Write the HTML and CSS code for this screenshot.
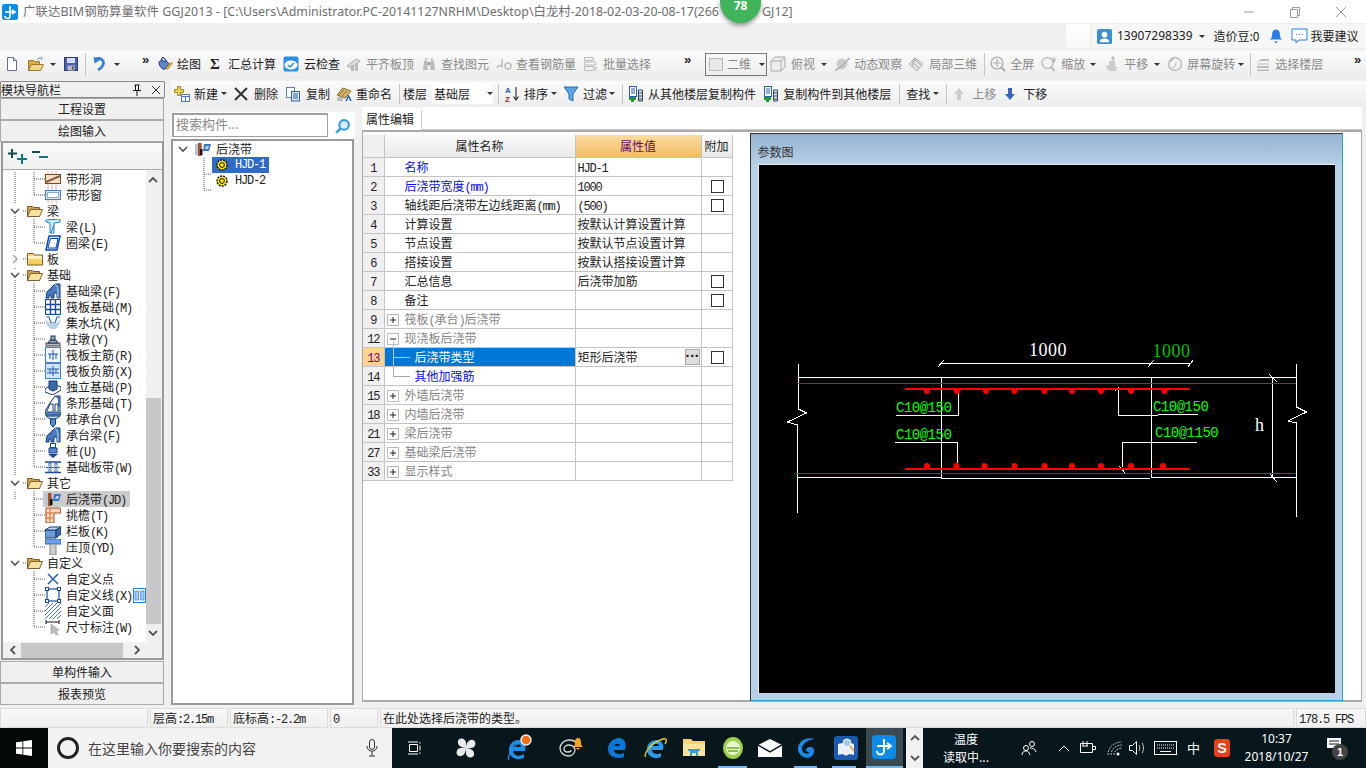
FILE: index.html
```html
<!DOCTYPE html>
<html lang="zh-CN">
<head>
<meta charset="utf-8">
<title>广联达BIM钢筋算量软件 GGJ2013</title>
<link rel="stylesheet" href="styles.css">
</head>
<body>
<svg class="defs" aria-hidden="true">
<defs>
<symbol id="caret-d" viewBox="0 0 10 10"><path d="M1 3l4 4 4-4" fill="none" stroke="#555" stroke-width="1.6"/></symbol>
<symbol id="caret-r" viewBox="0 0 10 10"><path d="M3 1l4 4-4 4" fill="none" stroke="#aaa" stroke-width="1.6"/></symbol>
<symbol id="arr-u" viewBox="0 0 10 10"><path d="M1 7l4-4 4 4" fill="none" stroke="#555" stroke-width="1.8"/></symbol>
<symbol id="arr-d" viewBox="0 0 10 10"><path d="M1 3l4 4 4-4" fill="none" stroke="#555" stroke-width="1.8"/></symbol>
<symbol id="arr-l" viewBox="0 0 10 10"><path d="M7 1L3 5l4 4" fill="none" stroke="#555" stroke-width="1.8"/></symbol>
<symbol id="arr-r" viewBox="0 0 10 10"><path d="M3 1l4 4-4 4" fill="none" stroke="#555" stroke-width="1.8"/></symbol>
<symbol id="new" viewBox="0 0 16 16"><path d="M3.500 1.500h6l3 3v10h-9z" fill="#fff" stroke="#67708a"/><path d="M9.500 1.500v3h3" fill="#d8dfef" stroke="#67708a"/></symbol>
<symbol id="open" viewBox="0 0 16 16"><path d="M.5 4.500h5l1 1h5v9H.5z" fill="#d9aa45" stroke="#9a7a2c"/><path d="M.5 14.500l3-6h12l-3 6z" fill="#f4d88a" stroke="#9a7a2c"/><path d="M9 4c1-2 3-3 5-2l-1-1m1 1l-1 2" fill="none" stroke="#6a90c0"/></symbol>
<symbol id="save" viewBox="0 0 16 16"><rect x="1.500" y="1.500" width="13" height="13" fill="#4b5fb4" stroke="#2d3a7c"/><rect x="4" y="2" width="8" height="5" fill="#d5dcf2"/><rect x="4.500" y="9.500" width="7" height="5" fill="#bbb"/><rect x="9" y="10.500" width="1.500" height="3" fill="#445"/></symbol>
<symbol id="undo" viewBox="0 0 16 16"><path d="M3 3.500c5-2.500 10 .5 8 5.500-1 2.500-3 4-5 5" fill="none" stroke="#3a80d0" stroke-width="2.800"/><path d="M1.500.5l1 7 5-3z" fill="#3a80d0"/></symbol>
<symbol id="draw" viewBox="0 0 16 16"><path d="M2 6l5-4 5 6-4 5c-3 1-6-3-6-7z" fill="#5d85c8" stroke="#223c78"/><path d="M4 3l2-2 3 3-2 2z" fill="#a7c0e8" stroke="#223c78"/><path d="M9 12l5-6 1.500 1.500-5 6z" fill="#e6b93d" stroke="#8a6c15" stroke-width=".6"/></symbol>
<symbol id="cloud" viewBox="0 0 16 16"><rect x=".5" y=".5" width="15" height="15" rx="2" fill="#2a8fe0"/><ellipse cx="8" cy="9" rx="6.500" ry="4.500" fill="#fff"/><path d="M5 9l2 2 4-4" fill="none" stroke="#2a8fe0" stroke-width="1.500"/></symbol>
<symbol id="flat" viewBox="0 0 16 16"><path d="M1 10l9-7 4 2-9 7z" fill="#ddd" stroke="#aaa"/><path d="M5 15V9h3v6zM9 15V7h3v8z" fill="#bbb"/></symbol>
<symbol id="binoc" viewBox="0 0 16 16"><path d="M2 14l1-9h3l1 9zM9 14l1-9h3l1 9z" fill="#bbb"/><rect x="4" y="2" width="2.500" height="3" fill="#ccc"/><rect x="9.500" y="2" width="2.500" height="3" fill="#ccc"/><rect x="6.500" y="6" width="3" height="3" fill="#999"/></symbol>
<symbol id="rebar" viewBox="0 0 16 16"><circle cx="12" cy="10" r="3" fill="none" stroke="#bbb" stroke-width="1.500"/><path d="M1 12c1-3 3-3 5-1 .5-1 0-6 0-8" fill="none" stroke="#bbb" stroke-width="1.500"/></symbol>
<symbol id="batch" viewBox="0 0 16 16"><path d="M1.500 1.500h9v3h-9zM1.500 6h11v3h-11zM1.500 10.500h9v4h-9z" fill="#f3f3f3" stroke="#bbb"/><path d="M10 10l5 2-2 1 1 2-1 .5-1-2-2 1z" fill="#ccc"/></symbol>
<symbol id="square" viewBox="0 0 16 16"><rect x="1.500" y="2.500" width="13" height="12" fill="#e8e8e8" stroke="#bbb"/></symbol>
<symbol id="cube" viewBox="0 0 16 16"><path d="M1 5l4-4h10v10l-4 4H1z" fill="#eee" stroke="#aaa"/><path d="M1 5h10v10M11 5l4-4" fill="none" stroke="#aaa"/></symbol>
<symbol id="orbit" viewBox="0 0 16 16"><circle cx="8" cy="8" r="5.500" fill="#ccc"/><path d="M1 14C4 14 13 6 15 2" fill="none" stroke="#aaa" stroke-width="1.500"/></symbol>
<symbol id="local" viewBox="0 0 16 16"><path d="M1 8l6-6 8 6-6 7z" fill="#e4e4e4" stroke="#aaa"/><path d="M4 6l7 6M7 4l6 5M7 2l-3 9" fill="none" stroke="#aaa"/></symbol>
<symbol id="full" viewBox="0 0 16 16"><circle cx="7" cy="7" r="6" fill="#eef2f4" stroke="#aaa" stroke-width="1.200"/><path d="M7 3v8M3 7h8" stroke="#aaa"/><path d="M11 11l4 4" stroke="#aaa" stroke-width="2"/></symbol>
<symbol id="zoom" viewBox="0 0 16 16"><circle cx="6.500" cy="7" r="5.500" fill="#f0f4f4" stroke="#bbb" stroke-width="1.400"/><path d="M10 11l3.500 4" stroke="#bbb" stroke-width="2"/><path d="M13 1v6M11 4h4" stroke="#aaa"/></symbol>
<symbol id="pan" viewBox="0 0 16 16"><path d="M5 15c-3-3-3-5-2-6l2 1V5h6v5l2 1-1 4z" fill="#ccc"/><path d="M9 0v5M7 2.500h4" stroke="#aaa"/></symbol>
<symbol id="rotate" viewBox="0 0 16 16"><circle cx="8" cy="8" r="6.500" fill="#f2f2f2" stroke="#bbb" stroke-width="1.400"/><path d="M3 3h4L3 7z" fill="#bbb"/><path d="M5 12c3-1 4-3 4-6" fill="none" stroke="#bbb"/></symbol>
<symbol id="layers" viewBox="0 0 16 16"><path d="M2 6l4-3h8v2H6zM2 10h12v2H2zM2 13.500h12v1.500H2zM2 7.500h12v1H2z" fill="#bbb"/></symbol>
<symbol id="add" viewBox="0 0 16 16"><path d="M3.500.5h3v3h3v3h-3v3h-3v-3h-3v-3h3z" fill="#f0d050" stroke="#a08a20"/><rect x="7.500" y="8.500" width="8" height="7" fill="#fff" stroke="#4a78b8"/><path d="M7.500 10.500h8M11.500 10.500v5" stroke="#4a78b8"/></symbol>
<symbol id="del" viewBox="0 0 16 16"><path d="M2 2l12 12M14 2L2 14" stroke="#333" stroke-width="2"/></symbol>
<symbol id="copy" viewBox="0 0 16 16"><rect x="1.500" y="1.500" width="8" height="10" fill="#fff" stroke="#5a7fb0"/><rect x="6.500" y="5.500" width="8" height="9.500" fill="#d8e6f8" stroke="#3a62a0"/><path d="M8 8h5M8 10h5M8 12h5" stroke="#3a62a0"/></symbol>
<symbol id="rename" viewBox="0 0 16 16"><path d="M1 9l6-7 8 3-6 7z" fill="#d9b66a" stroke="#8a6a2c"/><path d="M3 9l5-5M6 10l5-5" stroke="#8a6a2c"/><rect x="1" y="11" width="6" height="4" fill="#bbb"/><path d="M10 15l2.500-5 2.500 5" fill="none" stroke="#2a5fb0" stroke-width="1.600"/></symbol>
<symbol id="sort" viewBox="0 0 16 16"><text x="1" y="7" class="sv a">A</text><text x="1" y="15.500" class="sv z">Z</text><path d="M12 1v12M9.500 10.500L12 14l2.500-3.500" fill="none" stroke="#333" stroke-width="1.200"/></symbol>
<symbol id="filter" viewBox="0 0 16 16"><path d="M1 1h14L10 8v7l-4-2V8z" fill="#5ba5e8" stroke="#2a6aa8"/></symbol>
<symbol id="fcopy" viewBox="0 0 16 16"><rect x="1.500" y=".5" width="7" height="10" fill="#fff" stroke="#2a5fb0"/><path d="M3 3h4M3 5h4M3 7h4" stroke="#2a5fb0"/><path d="M1 11h7v3H6v2H3v-2H1z" fill="#1e9a3a"/><path d="M10.500 4h4v11h-4z" fill="#dce8f6" stroke="#345"/><path d="M10.500 7h4M10.500 10h4M10.500 13h4" stroke="#345"/></symbol>
<symbol id="up" viewBox="0 0 16 16"><path d="M8 2l5 6h-3v6H6V8H3z" fill="#ccc"/></symbol>
<symbol id="down" viewBox="0 0 16 16"><path d="M6 2h4v6h3l-5 6-5-6h3z" fill="#3a66c8"/></symbol>
<symbol id="plus2" viewBox="0 0 22 16"><path d="M4 1v9M0 5.500h9" stroke="#174a4a" stroke-width="2"/><path d="M14 6v10M9 11h10" stroke="#0f7a7a" stroke-width="2"/></symbol>
<symbol id="minus2" viewBox="0 0 20 16"><path d="M0 4h8" stroke="#174a4a" stroke-width="2"/><path d="M7 9h9" stroke="#0f7a7a" stroke-width="2"/></symbol>
<symbol id="pin" viewBox="0 0 10 12"><path d="M2.500 1h5M3.500 1v5M6.500 1v5M1 6.500h8M5 7v5" stroke="#111" fill="none"/></symbol>
<symbol id="folder-o" viewBox="0 0 16 16"><path d="M.5 3.500h5l1 1h6v9H.5z" fill="#caa14c" stroke="#7a6230"/><path d="M.5 13.500l3-7h12l-3 7z" fill="#f9e3a2" stroke="#7a6230"/></symbol>
<symbol id="folder" viewBox="0 0 16 16"><path d="M.5 2.500h6l1 1.500h8v10H.5z" fill="#f7cf62" stroke="#7a6230"/><rect x="1" y="5" width="14" height="3" fill="#fff2c0"/></symbol>
<symbol id="t-hole" viewBox="0 0 16 16"><rect x=".5" y="3.500" width="15" height="9" fill="#f8e0c8" stroke="#7c4a1e"/><path d="M1 11l14-6" stroke="#8a6040" stroke-width="2"/><path d="M3 0v3M7 0v3M11 0v3M3 13v3M7 13v3M11 13v3" stroke="#f0b090"/></symbol>
<symbol id="t-win" viewBox="0 0 16 16"><rect x=".5" y="3.500" width="15" height="9" fill="#dce8fa" stroke="#4a78c8"/><rect x="2.500" y="5.500" width="11" height="5" fill="#fff" stroke="#8ab"/><path d="M3 0v3M7 0v3M11 0v3M3 13v3M7 13v3M11 13v3" stroke="#f0b090"/></symbol>
<symbol id="t-beam" viewBox="0 0 16 16"><path d="M1 1l14-1v3l-6 1v10H5V4L1 3z" fill="#d4ecfa" stroke="#2a7ad0"/><path d="M6 14l3-8" stroke="#2a7ad0"/></symbol>
<symbol id="t-ring" viewBox="0 0 16 16"><path d="M4 1h11l-3 14H1z" fill="#e8f0ff" stroke="#0a46b0" stroke-width="1.500"/><path d="M5.500 3.500H13L11 13H3z" fill="#fff" stroke="#0a46b0"/></symbol>
<symbol id="t-fbeam" viewBox="0 0 16 16"><path d="M1 15l1-6 8-8h5v14h-3v-5H9v5H6v-3H4v3z" fill="#4a7cc0" stroke="#123a78"/><path d="M10 1l3 4v10" fill="none" stroke="#c0d8f0"/></symbol>
<symbol id="t-raft" viewBox="0 0 16 16"><rect x=".5" y=".5" width="15" height="15" fill="#fff" stroke="#1a4a98" stroke-width="1.200"/><path d="M5.500 0v16M10.500 0v16M0 5.500h16M0 10.500h16" stroke="#1a4a98" stroke-width="1.400"/></symbol>
<symbol id="t-pit" viewBox="0 0 16 16"><path d="M1 2h3l2 6h4l2-6h3" fill="none" stroke="#3a6ab0" stroke-width="1.200"/><path d="M1 5c1 6 3 9 7 9s6-3 7-9l-3 3H4z" fill="#bcd0ec" stroke="#8aa" stroke-width=".5" stroke-dasharray="1 1"/></symbol>
<symbol id="t-pier" viewBox="0 0 16 16"><rect x="1" y="12" width="14" height="3" fill="#bbb" stroke="#444"/><path d="M3 12l2-3h6l2 3z" fill="#8ca8d0" stroke="#234"/><rect x="6" y="5" width="4" height="4" fill="#8ca8d0" stroke="#234"/></symbol>
<symbol id="t-main" viewBox="0 0 16 16"><rect x=".5" y=".5" width="15" height="15" fill="#f0f6ff" stroke="#4a80d0"/><path d="M3 7h10M8 3v10M5 7v5M11 7v5" stroke="#1a5ab8"/></symbol>
<symbol id="t-neg" viewBox="0 0 16 16"><rect x=".5" y=".5" width="15" height="15" fill="#d4e4fa" stroke="#4a80d0"/><path d="M2 6h12M2 10h12M8 3v10M5 6v4M11 6v4" stroke="#1a5ab8"/></symbol>
<symbol id="t-iso" viewBox="0 0 16 16"><path d="M0 10l8-5 8 3v3l-8 5-8-3z" fill="#fff" stroke="#123a78"/><path d="M4 2h8v8l-4 2-4-2z" fill="#3a68a8" stroke="#123a78"/></symbol>
<symbol id="t-strip" viewBox="0 0 16 16"><path d="M0 16l5-8 5-7h5v15h-2V9h-3v7H8V9H5l-3 7z" fill="#fff" stroke="#123a78"/><path d="M10 1l3 3v8h2V1z" fill="#3a68a8"/></symbol>
<symbol id="t-cap" viewBox="0 0 16 16"><path d="M0 1h16v3H0z" fill="#5a8ad0" stroke="#123a78"/><path d="M1 5h14l-4 3H5z" fill="#c8dcf4" stroke="#123a78"/><path d="M5.500 8h5v5l-2.500 3-2.500-3z" fill="#5a8ad0" stroke="#123a78"/></symbol>
<symbol id="t-pile" viewBox="0 0 16 16"><rect x="5.500" y=".5" width="5" height="4" fill="#fff" stroke="#1a4a98"/><path d="M4 5h8v5H4z" fill="#5a8ad0" stroke="#1a4a98"/><path d="M3 11h10l-5 4z" fill="#1a4a98"/></symbol>
<symbol id="t-band" viewBox="0 0 16 16"><path d="M0 3h16M0 13.500h16" stroke="#1a4a98" stroke-width="1.500"/><path d="M4 4h2v9H4zM10 4h2v9h-2z" fill="#fff" stroke="#1a4a98" stroke-width=".8"/><path d="M1 8.500h14" stroke="#1a4a98" stroke-dasharray="2 1"/></symbol>
<symbol id="t-pour" viewBox="0 0 16 16"><rect x="0" y="3" width="7" height="11" fill="#b8c4dc"/><rect x="3" y="2" width="3.500" height="13" fill="#a8522a"/><rect x="5" y="8" width="2.500" height="6" fill="#111"/><path d="M9 3h7l-2 7H8z" fill="#3a74c8"/><path d="M11 5h3l-1 3h-3z" fill="#b8d0f0"/></symbol>
<symbol id="t-eave" viewBox="0 0 16 16"><path d="M1 1h14l1 5h-7v10H1z" fill="#fcd9c0" stroke="#a04a1a"/><path d="M1 6h8M1 11h8M5 1v15" stroke="#d86a2a"/></symbol>
<symbol id="t-rail" viewBox="0 0 16 16"><path d="M0 7h11v8H0z" fill="#6a9ad8" stroke="#123a78"/><path d="M0 7l5-3h11l-5 3z" fill="#c8dcf4" stroke="#123a78"/><path d="M11 7l5-3v7l-5 4z" fill="#3a68a8" stroke="#123a78"/></symbol>
<symbol id="t-top" viewBox="0 0 16 16"><path d="M0 0h16v5H0z" fill="#6aa4e4" stroke="#2a62a8"/><rect x="5" y="5" width="6" height="11" fill="#ccc" stroke="#888"/></symbol>
<symbol id="t-pt" viewBox="0 0 16 16"><path d="M3 3l10 10M13 3L3 13" stroke="#2a62a8" stroke-width="1.600"/></symbol>
<symbol id="t-line" viewBox="0 0 16 16"><rect x="2" y="2" width="12" height="12" fill="#fff" stroke="#1a4a98" stroke-width="1.200"/><g fill="#fff" stroke="#1a4a98"><rect x=".5" y=".5" width="3" height="3"/><rect x="12.500" y=".5" width="3" height="3"/><rect x=".5" y="12.500" width="3" height="3"/><rect x="12.500" y="12.500" width="3" height="3"/></g></symbol>
<symbol id="t-area" viewBox="0 0 16 16"><path d="M0 4l4-4M0 8l8-8M0 12L12 0M0 16L16 0M4 16L16 4M8 16l8-8M12 16l4-4" stroke="#3a6ab0" stroke-width=".9"/></symbol>
<symbol id="t-dim" viewBox="0 0 16 16"><path d="M1 1v4M14 1v4M1 3h13" stroke="#111"/><path d="M6 5l8 6-3 1 2 4-2 0-2-3-3 2z" fill="#bbb" stroke="#888" stroke-width=".5"/></symbol>
<symbol id="gear" viewBox="0 0 12 12"><circle cx="6" cy="6" r="5" fill="#ffe800" stroke="#111" stroke-width="1.400" stroke-dasharray="2 1"/><circle cx="6" cy="6" r="2.400" fill="#ffe800" stroke="#111"/></symbol>
<symbol id="box-plus" viewBox="0 0 12 12"><rect x=".5" y=".5" width="11" height="11" fill="#fff" stroke="#bbb"/><path d="M3 6h6M6 3v6" stroke="#222"/></symbol>
<symbol id="box-minus" viewBox="0 0 12 12"><rect x=".5" y=".5" width="11" height="11" fill="#fff" stroke="#bbb"/><path d="M3 6h6" stroke="#222"/></symbol>
</defs>
</svg>

<div class="app">
  <header class="titlebar">
    <svg class="logo" viewBox="0 0 16 16"><rect width="16" height="16" rx="2.500" fill="#0d8be8"/><path d="M8 2v10a2.500 2.500 0 0 1-5 0M3 8h10M10 6l3 2-3 2" fill="none" stroke="#fff" stroke-width="1.600"/></svg>
    <span class="apptitle t1"><span class="hd">广联达BIM钢筋算量软件 GGJ2013 - </span>[C:\Users\Administrator.PC-20141127NRHM\Desktop\白龙村-2018-02-03-20-08-17(266</span>
    <span class="apptitle t2">GJ12]</span>
    <div class="winctl">
      <svg viewBox="0 0 12 12"><path d="M1 6h10" stroke="#999"/></svg>
      <svg viewBox="0 0 12 12"><path d="M1.500 3.500h7v8h-7zM3.500 3.500v-2h7v8h-2" fill="none" stroke="#999"/></svg>
      <svg viewBox="0 0 12 12"><path d="M1 1l10 10M11 1L1 11" stroke="#999"/></svg>
    </div>
    <div class="badge"><span>78</span></div>
  </header>

  <div class="userbar">
    <div class="ublank"></div>
    <div class="ubox">
      <svg class="avatar" viewBox="0 0 16 16"><rect width="16" height="16" rx="2" fill="#3d8fd0"/><circle cx="8" cy="6" r="3" fill="#fff"/><path d="M3 14c0-3 2-4 5-4s5 1 5 4z" fill="#fff"/></svg>
      <span class="phone">13907298339</span>
      <i class="caret c-phone"></i>
      <span class="beans">造价豆:0</span>
      <svg class="bell" viewBox="0 0 14 16"><path d="M7 1c3 0 4 3 4 6 0 2 1 3 2 4H1c1-1 2-2 2-4 0-3 1-6 4-6zM5 13h4l-2 2z" fill="#2a7ee8"/></svg>
      <svg class="chat" viewBox="0 0 17 16"><path d="M1 1h15v11H8l-3 3v-3H1z" fill="#fff" stroke="#2a7ee8"/><path d="M5 6.500h1M8 6.500h1M11 6.500h1" stroke="#2a7ee8"/></svg>
      <span class="suggest">我要建议</span>
    </div>
  </div>

  <nav class="toolbar tb1">
    <svg class="ic g4"><use href="#new"/></svg>
    <svg class="ic g8"><use href="#open"/></svg><i class="caret g6"></i>
    <svg class="ic g7"><use href="#save"/></svg>
    <i class="sep tall g6"></i>
    <svg class="ic g6"><use href="#undo"/></svg><i class="caret g6"></i>
    <b class="more g22">»</b>
    <div class="tool g7"><svg class="ic"><use href="#draw"/></svg><span>绘图</span></div>
    <div class="tool g9"><b class="sigma">Σ</b><span>汇总计算</span></div>
    <div class="tool g7 wide"><svg class="ic"><use href="#cloud"/></svg><span>云检查</span></div>
    <div class="tool g6 off"><svg class="ic"><use href="#flat"/></svg><span>平齐板顶</span></div>
    <div class="tool g7 off"><svg class="ic"><use href="#binoc"/></svg><span>查找图元</span></div>
    <div class="tool g7 off"><svg class="ic"><use href="#rebar"/></svg><span>查看钢筋量</span></div>
    <div class="tool g7 off"><svg class="ic"><use href="#batch"/></svg><span>批量选择</span></div>
    <b class="more g33">»</b>
    <div class="combo2d g13"><svg class="ic"><use href="#square"/></svg><span>二维</span><i class="caret"></i></div>
    <div class="tool g3 off wide"><svg class="ic"><use href="#cube"/></svg><span>俯视</span></div><i class="caret g6"></i>
    <div class="tool g7 off"><svg class="ic"><use href="#orbit"/></svg><span>动态观察</span></div>
    <div class="tool g6 off wide"><svg class="ic"><use href="#local"/></svg><span>局部三维</span></div>
    <i class="sep tall g7"></i>
    <div class="tool g5 off"><svg class="ic"><use href="#full"/></svg><span>全屏</span></div>
    <div class="tool g7 off"><svg class="ic"><use href="#zoom"/></svg><span>缩放</span></div><i class="caret g5"></i>
    <div class="tool g8 off"><svg class="ic"><use href="#pan"/></svg><span>平移</span></div><i class="caret g6"></i>
    <div class="tool g7 off"><svg class="ic"><use href="#rotate"/></svg><span>屏幕旋转</span></div><i class="caret g3"></i>
    <i class="sep tall g6"></i>
    <div class="tool g4 off"><svg class="ic"><use href="#layers"/></svg><span>选择楼层</span></div>
    <b class="more end">»</b>
  </nav>

  <main class="workspace">
    <aside class="nav">
      <div class="navhead"><span>模块导航栏</span><svg class="pin"><use href="#pin"/></svg><svg class="closex" viewBox="0 0 10 10"><path d="M1 1l8 8M9 1L1 9" stroke="#333"/></svg></div>
      <button class="navbtn">工程设置</button>
      <button class="navbtn">绘图输入</button>
      <div class="navpanel">
        <div class="subtool"><svg class="p2"><use href="#plus2"/></svg><svg class="m2"><use href="#minus2"/></svg></div>
        <div class="treewrap">
          <div class="treeview">
            <svg class="dots" viewBox="0 0 143 472"><path d="M12 2V34M12 46V82M12 98V306M12 322V330M31 2V25M20 41h4M31 49V73M31 57h11M31 73h11M31 9h11M31 25h11M20 105h4M31 113V297M31 121h11M31 137h11M31 153h11M31 169h11M31 185h11M31 201h11M31 217h11M31 233h11M31 249h11M31 265h11M31 281h11M31 297h11M20 313h4M31 321V377M31 329h11M31 345h11M31 361h11M31 377h11M20 393h4M31 401V457M31 409h11M31 425h11M31 441h11M31 457h11M20 89h4" fill="none" stroke="#555" stroke-dasharray="1 1"/></svg>
            <div class="row lv2"><svg class="ic"><use href="#t-hole"/></svg><span>带形洞</span></div>
            <div class="row lv2"><svg class="ic"><use href="#t-win"/></svg><span>带形窗</span></div>
            <div class="row lv1"><svg class="chev"><use href="#caret-d"/></svg><svg class="ic fld"><use href="#folder-o"/></svg><span>梁</span></div>
            <div class="row lv2"><svg class="ic"><use href="#t-beam"/></svg><span>梁<em>(L)</em></span></div>
            <div class="row lv2"><svg class="ic"><use href="#t-ring"/></svg><span>圈梁<em>(E)</em></span></div>
            <div class="row lv1"><svg class="chev"><use href="#caret-r"/></svg><svg class="ic fld"><use href="#folder"/></svg><span>板</span></div>
            <div class="row lv1"><svg class="chev"><use href="#caret-d"/></svg><svg class="ic fld"><use href="#folder-o"/></svg><span>基础</span></div>
            <div class="row lv2"><svg class="ic"><use href="#t-fbeam"/></svg><span>基础梁<em>(F)</em></span></div>
            <div class="row lv2"><svg class="ic"><use href="#t-raft"/></svg><span>筏板基础<em>(M)</em></span></div>
            <div class="row lv2"><svg class="ic"><use href="#t-pit"/></svg><span>集水坑<em>(K)</em></span></div>
            <div class="row lv2"><svg class="ic"><use href="#t-pier"/></svg><span>柱墩<em>(Y)</em></span></div>
            <div class="row lv2"><svg class="ic"><use href="#t-main"/></svg><span>筏板主筋<em>(R)</em></span></div>
            <div class="row lv2"><svg class="ic"><use href="#t-neg"/></svg><span>筏板负筋<em>(X)</em></span></div>
            <div class="row lv2"><svg class="ic"><use href="#t-iso"/></svg><span>独立基础<em>(P)</em></span></div>
            <div class="row lv2"><svg class="ic"><use href="#t-strip"/></svg><span>条形基础<em>(T)</em></span></div>
            <div class="row lv2"><svg class="ic"><use href="#t-cap"/></svg><span>桩承台<em>(V)</em></span></div>
            <div class="row lv2"><svg class="ic"><use href="#t-fbeam"/></svg><span>承台梁<em>(F)</em></span></div>
            <div class="row lv2"><svg class="ic"><use href="#t-pile"/></svg><span>桩<em>(U)</em></span></div>
            <div class="row lv2"><svg class="ic"><use href="#t-band"/></svg><span>基础板带<em>(W)</em></span></div>
            <div class="row lv1"><svg class="chev"><use href="#caret-d"/></svg><svg class="ic fld"><use href="#folder-o"/></svg><span>其它</span></div>
            <div class="row lv2 cur"><svg class="ic"><use href="#t-pour"/></svg><span>后浇带<em>(JD)</em></span></div>
            <div class="row lv2"><svg class="ic"><use href="#t-eave"/></svg><span>挑檐<em>(T)</em></span></div>
            <div class="row lv2"><svg class="ic"><use href="#t-rail"/></svg><span>栏板<em>(K)</em></span></div>
            <div class="row lv2"><svg class="ic"><use href="#t-top"/></svg><span>压顶<em>(YD)</em></span></div>
            <div class="row lv1"><svg class="chev"><use href="#caret-d"/></svg><svg class="ic fld"><use href="#folder-o"/></svg><span>自定义</span></div>
            <div class="row lv2"><svg class="ic"><use href="#t-pt"/></svg><span>自定义点</span></div>
            <div class="row lv2"><svg class="ic"><use href="#t-line"/></svg><span>自定义线<em>(X)</em></span><svg class="gridbtn" viewBox="0 0 13 15"><rect x=".5" y=".5" width="12" height="14" fill="#fff" stroke="#2a7ee8"/><path d="M2 3h3.500v9H2zM7.500 3H11v9H7.500z" fill="#a8c8f0" stroke="#2a7ee8" stroke-width=".7"/></svg></div>
            <div class="row lv2"><svg class="ic"><use href="#t-area"/></svg><span>自定义面</span></div>
            <div class="row lv2"><svg class="ic"><use href="#t-dim"/></svg><span>尺寸标注<em>(W)</em></span></div>
          </div>
          <div class="vscroll">
            <svg class="sarrow"><use href="#arr-u"/></svg>
            <div class="vthumb"></div>
            <svg class="sarrow"><use href="#arr-d"/></svg>
          </div>
        </div>
        <div class="hscroll">
          <svg class="sarrow"><use href="#arr-l"/></svg>
          <div class="hthumb"></div>
          <svg class="sarrow"><use href="#arr-r"/></svg>
        </div>
      </div>
      <button class="navbtn b1">单构件输入</button>
      <button class="navbtn">报表预览</button>
    </aside>

    <section class="content">
      <nav class="toolbar tb2">
        <div class="tool g3"><svg class="ic"><use href="#add"/></svg><span>新建</span></div><i class="caret g3"></i>
        <div class="tool g6 wide"><svg class="ic"><use href="#del"/></svg><span>删除</span></div>
        <div class="tool g7 wide"><svg class="ic"><use href="#copy"/></svg><span>复制</span></div>
        <div class="tool g6"><svg class="ic"><use href="#rename"/></svg><span>重命名</span></div>
        <i class="sep g7"></i>
        <span class="plain g3">楼层</span>
        <div class="floor g5"><span>基础层</span><i class="caret"></i></div>
        <i class="sep g5"></i>
        <div class="tool g5"><svg class="ic"><use href="#sort"/></svg><span>排序</span></div><i class="caret g3"></i>
        <div class="tool g6"><svg class="ic"><use href="#filter"/></svg><span>过滤</span></div><i class="caret g2"></i>
        <i class="sep g7"></i>
        <div class="tool g5"><svg class="ic"><use href="#fcopy"/></svg><span>从其他楼层复制构件</span></div>
        <div class="tool g7"><svg class="ic"><use href="#fcopy"/></svg><span>复制构件到其他楼层</span></div>
        <i class="sep g8"></i>
        <span class="plain g6">查找</span><i class="caret g3"></i>
        <i class="sep g7"></i>
        <div class="tool g4 wide off"><svg class="ic"><use href="#up"/></svg><span>上移</span></div>
        <div class="tool g6 wide"><svg class="ic"><use href="#down"/></svg><span>下移</span></div>
      </nav>
      <div class="panes">
        <div class="midcol">
          <div class="searchrow">
            <div class="searchbox">搜索构件...</div>
            <svg class="searchbtn" viewBox="0 0 16 16"><circle cx="9.500" cy="6.500" r="4.500" fill="#d8ecfa" stroke="#3a9ae0" stroke-width="2"/><path d="M6 10l-4 4" stroke="#3a9ae0" stroke-width="2.500"/></svg>
          </div>
          <div class="comp">
            <svg class="dots2" viewBox="0 0 20 44"><path d="M1 1V33M1 17h8M1 33h8" fill="none" stroke="#555" stroke-dasharray="1 1"/></svg>
            <div class="crow"><svg class="chev"><use href="#caret-d"/></svg><svg class="ic"><use href="#t-pour"/></svg><span>后浇带</span></div>
            <div class="crow sub"><div class="csel"><svg class="gear"><use href="#gear"/></svg><em>HJD-1</em></div></div>
            <div class="crow sub"><div class="cnon"><svg class="gear"><use href="#gear"/></svg><em>HJD-2</em></div></div>
          </div>
        </div>
        <div class="propcol">
          <div class="tabs"><div class="tab">属性编辑</div></div>
          <div class="propbody">
            <table class="grid">
              <colgroup><col class="c0"><col class="c1"><col class="c2"><col class="c3"></colgroup>
              <thead><tr><th></th><th>属性名称</th><th class="hv">属性值</th><th>附加</th></tr></thead>
              <tbody>
                <tr><th><em>1</em></th><td class="nm blue">名称</td><td class="vl"><em>HJD-1</em></td><td></td></tr>
                <tr><th><em>2</em></th><td class="nm blue">后浇带宽度<em>(mm)</em></td><td class="vl"><em>1000</em></td><td class="ck"><i></i></td></tr>
                <tr><th><em>3</em></th><td class="nm">轴线距后浇带左边线距离<em>(mm)</em></td><td class="vl"><em>(500)</em></td><td class="ck"><i></i></td></tr>
                <tr><th><em>4</em></th><td class="nm">计算设置</td><td class="vl">按默认计算设置计算</td><td></td></tr>
                <tr><th><em>5</em></th><td class="nm">节点设置</td><td class="vl">按默认节点设置计算</td><td></td></tr>
                <tr><th><em>6</em></th><td class="nm">搭接设置</td><td class="vl">按默认搭接设置计算</td><td></td></tr>
                <tr><th><em>7</em></th><td class="nm">汇总信息</td><td class="vl">后浇带加筋</td><td class="ck"><i></i></td></tr>
                <tr><th><em>8</em></th><td class="nm">备注</td><td class="vl"></td><td class="ck"><i></i></td></tr>
                <tr><th><em>9</em></th><td class="gp"><svg class="bx"><use href="#box-plus"/></svg>筏板<em>(</em>承台<em>)</em>后浇带</td><td></td><td></td></tr>
                <tr><th><em>12</em></th><td class="gp"><svg class="bx"><use href="#box-minus"/></svg>现浇板后浇带</td><td></td><td></td></tr>
                <tr class="act"><th><em>13</em></th><td class="nm sel"><i class="tw v1"></i><i class="tw h1"></i>后浇带类型</td><td class="vl vrel">矩形后浇带<b class="dots3">···</b></td><td class="ck"><i></i></td></tr>
                <tr><th><em>14</em></th><td class="nm blue in"><i class="tw v2"></i><i class="tw h2"></i>其他加强筋</td><td></td><td></td></tr>
                <tr><th><em>15</em></th><td class="gp"><svg class="bx"><use href="#box-plus"/></svg>外墙后浇带</td><td></td><td></td></tr>
                <tr><th><em>18</em></th><td class="gp"><svg class="bx"><use href="#box-plus"/></svg>内墙后浇带</td><td></td><td></td></tr>
                <tr><th><em>21</em></th><td class="gp"><svg class="bx"><use href="#box-plus"/></svg>梁后浇带</td><td></td><td></td></tr>
                <tr><th><em>27</em></th><td class="gp"><svg class="bx"><use href="#box-plus"/></svg>基础梁后浇带</td><td></td><td></td></tr>
                <tr><th><em>33</em></th><td class="gp"><svg class="bx"><use href="#box-plus"/></svg>显示样式</td><td></td><td></td></tr>
              </tbody>
            </table>
            <div class="params">
              <div class="ptitle">参数图</div>
              <div class="canvas">
                <svg viewBox="759 165 576 528" class="cad">
                  <g fill="none" stroke="#fff">
                    <path d="M798.500 364V409L806.500 413 787.500 422 797.500 425V513"/>
                    <path d="M1296.500 364V407L1306.500 412 1288 421 1296.500 423V517"/>
                    <path d="M798 377.500H1296M798 477.500H941M1151 477.500H1296M941 478.500H1150"/>
                    <path d="M941.500 377V478M1151.500 377V477"/>
                    <path d="M941 363.500H1190.500M938 367l6-7M1148 367l6-7M1188 367l5-7"/>
                    <path d="M896 415.500H958.500V391M1118.500 387V415.500H1158M1158 414.500H1198M1115 391l4-4"/>
                    <path d="M895 442.500H957.500V463M1197 442.500H1122.500V467M1119 466l6 7"/>
                    <path d="M1272.500 377V477M1269 374l8 8M1269 473l8 9"/>
                  </g>
                  <g stroke="#f00" fill="none">
                    <path d="M798 383.500H1296M796 473.500H1295"/>
                    <path d="M905 389H1190M905 469H1190" stroke-width="2"/>
                  </g>
                  <g fill="#f00" class="bars">
                    <circle cx="927" cy="391" r="3"/><circle cx="957" cy="391" r="3"/><circle cx="986" cy="391" r="3"/><circle cx="1014.500" cy="391" r="3"/><circle cx="1044.500" cy="391" r="3"/><circle cx="1072" cy="391" r="3"/><circle cx="1101" cy="391" r="3"/><circle cx="1131" cy="391" r="3"/><circle cx="1164.500" cy="391" r="3"/>
                    <circle cx="927" cy="466" r="3"/><circle cx="956.500" cy="466" r="3"/><circle cx="984.500" cy="466" r="3"/><circle cx="1014.500" cy="466" r="3"/><circle cx="1044.500" cy="466" r="3"/><circle cx="1072" cy="466" r="3"/><circle cx="1101" cy="466" r="3"/><circle cx="1131" cy="466" r="3"/><circle cx="1163" cy="466" r="3"/>
                  </g>
                  <text x="1029" y="356" class="dim wh">1000</text>
                  <text x="1152.500" y="357" class="dim gn">1000</text>
                  <text x="1255" y="431" class="dim wh">h</text>
                  <text x="896" y="412" class="lbl">C10@150</text>
                  <text x="1153" y="411" class="lbl">C10@150</text>
                  <text x="896" y="439" class="lbl">C10@150</text>
                  <text x="1155" y="437" class="lbl">C10@1150</text>
                </svg>
              </div>
            </div>
          </div>
        </div>
      </div>
    </section>
  </main>

  <footer class="status">
    <div class="cell s0"></div>
    <div class="cell s1">层高<em>:2.15m</em></div>
    <div class="cell s2">底标高<em>:-2.2m</em></div>
    <div class="cell s3"><em>0</em></div>
    <div class="cell s4">在此处选择后浇带的类型。</div>
    <div class="cell s5"><em>178.5 FPS</em></div>
  </footer>

  <div class="taskbar">
    <div class="start"><svg class="winlogo" viewBox="0 0 16 16"><path d="M0 2.300l6.500-.9v6.200H0zM7.300 1.300L16 0v7.600H7.300zM0 8.400h6.500v6.200L0 13.700zM7.300 8.400H16V16l-8.700-1.200z" fill="#fff"/></svg></div>
    <div class="search">
      <i class="cortana"></i>
      <span>在这里输入你要搜索的内容</span>
      <svg class="mic" viewBox="0 0 12 18"><rect x="3.500" y=".5" width="5" height="10" rx="2.500" fill="none" stroke="#333"/><path d="M1 7c0 7 10 7 10 0M6 13v4M3 17h6" fill="none" stroke="#333"/></svg>
    </div>
    <div class="tray-apps">
      <svg class="tk tv" viewBox="0 0 16 16"><path d="M2.500 4.500h8v7h-8zM1 2h10M1 14h10M13 2v1.500M13 5.500v5M13 12.500V14" fill="none" stroke="#fff"/></svg>
      <svg class="tk fan" viewBox="0 0 22 22"><path d="M11 11C6 11 2 8 3 4s8-3 8 2zM11 11c0-5 3-9 7-8s3 8-2 8zM11 11c5 0 9 3 8 7s-8 3-8-2zM11 11c0 5-3 9-7 8s-3-8 2-8z" fill="#e8eaec"/></svg>
      <svg class="tk ie1" viewBox="0 0 26 28"><path d="M19 17h-12c0 5 7 6 11 3v4c-7 3-15 0-15-8C3 8 11 4 16 7c3 2 4 5 3 10zM7 13h8c0-4-7-4-8 0z" fill="#1e90e8"/><path d="M3 26C0 24 7 9 22 4" fill="none" stroke="#1e90e8" stroke-width="1.200"/><circle cx="20" cy="6" r="5" fill="#f27010" stroke="#eee" stroke-width="1.500"/></svg>
      <svg class="tk sw" viewBox="0 0 28 24"><path d="M12 20c-6 0-9-4-9-8s4-8 9-8c3 0 6 1 7 3M12 20c3 0 6-3 6-6s-3-5-6-5-5 2-5 4 2 3 4 3 3-1 3-2" fill="none" stroke="#ddd" stroke-width="1.300"/><path d="M21 2c3 0 3 3 3 5s1 3 2 4H16c1-1 2-2 2-4s0-5 3-5zM19 12h4l-2 2z" fill="#f0a818"/></svg>
      <svg class="tk ed" viewBox="0 0 20 20"><path d="M18 12H7c0 4 6 5 10 3v4C9 22 1 18 1 11 1 4 7 0 12 0c5 0 8 5 6 12zM7 8h6c0-3-5-3-6 0z" fill="#0a78d8"/></svg>
      <svg class="tk ie2" viewBox="0 0 24 24"><path d="M20 14H9c0 4 6 5 9 3v4c-6 3-14 0-14-8 0-7 8-11 13-8 3 2 4 5 3 9zM9 10h7c0-3-6-3-7 0z" fill="#2a9ae8"/><path d="M3 20C0 22 4 8 20 3c4-1 4 2 2 5" fill="none" stroke="#e8c830" stroke-width="1.400"/></svg>
      <svg class="tk fd" viewBox="0 0 22 20"><path d="M0 1h8l2 2h12v15H0z" fill="#f5d36e"/><rect y="6" width="22" height="12" fill="#fae39a"/><path d="M7 18v-5h8v5h-2v-3H9v3z" fill="#3a9ae0"/><rect x="5" y="11" width="12" height="2" fill="#3a9ae0"/></svg>
      <svg class="tk grn" viewBox="0 0 22 24"><ellipse cx="11" cy="12" rx="10" ry="11" fill="#9ed04c"/><circle cx="11" cy="12" r="7" fill="#eaf5d0"/><path d="M5 12h12M6 15h10" stroke="#6aa82a" stroke-width="1.500"/></svg>
      <svg class="tk ml" viewBox="0 0 24 18"><path d="M0 6l12-6 12 6v12H0z" fill="#fff"/><path d="M0 6l12 7 12-7" fill="none" stroke="#0a1a20" stroke-width="1.500"/></svg>
      <svg class="tk gg" viewBox="0 0 24 24"><path d="M20 3c-8-3-18 2-17 11 1 7 10 10 14 6 3-3 3-8-1-9-4 0-5 2-5 4l3 1c0 3-7 2-7-3 0-5 5-9 13-10z" fill="#1a8ae8"/></svg>
      <svg class="tk bk" viewBox="0 0 24 24"><rect width="24" height="24" rx="3" fill="#1a5ab0"/><path d="M4 8c3-1 6-1 8 1 2-2 5-2 8-1v11c-3-1-6-1-8 1-2-2-5-2-8-1z" fill="#e8f0fa"/><circle cx="13" cy="7" r="4" fill="#a8c8f0" stroke="#fff"/><path d="M16 10l4 5" stroke="#f0a040" stroke-width="2"/></svg>
      <i class="ul u1"></i><i class="ul u2"></i><i class="ul u3"></i>
      <div class="activeapp"><svg viewBox="0 0 24 24"><rect width="24" height="24" rx="4" fill="#0d8be8"/><path d="M12 4v12a3.500 3.500 0 0 1-7 0M5 11h14M15 8l4 3-4 3" fill="none" stroke="#fff" stroke-width="2"/></svg></div>
    </div>
    <div class="tbscroll"><svg class="sarrow"><use href="#arr-u"/></svg><svg class="sarrow"><use href="#arr-d"/></svg></div>
    <div class="weather"><span>温度</span><span>读取中...</span></div>
    <svg class="sys people" viewBox="0 0 16 16"><circle cx="5" cy="8" r="2.500" fill="none" stroke="#fff"/><circle cx="11" cy="4" r="2.500" fill="none" stroke="#fff"/><path d="M1 15c0-3 2-4 4-4s3 1 4 4M9 8c3 0 5 1 6 4" fill="none" stroke="#fff"/></svg>
    <svg class="sys up" viewBox="0 0 12 8"><path d="M1 7l5-5 5 5" fill="none" stroke="#fff"/></svg>
    <svg class="sys bat" viewBox="0 0 18 16"><path d="M1.500 3.500h12v9h-12zM13.500 6.500h3v3h-3z" fill="none" stroke="#fff"/><path d="M4 1v5M8 1v5M3 6h6" stroke="#fff"/></svg>
    <svg class="sys wifi" viewBox="0 0 16 16"><path d="M1 15C1 7 7 2 15 2M4 15c0-6 5-10 11-10M7 15c0-4 4-7 8-7" fill="none" stroke="#bbb" stroke-dasharray="2 1"/><circle cx="11" cy="14" r="1.500" fill="#fff"/></svg>
    <svg class="sys vol" viewBox="0 0 18 16"><path d="M1.500 5.500h3l4-4v13l-4-4h-3z" fill="none" stroke="#fff"/><path d="M11 5c1 2 1 4 0 6M14 3c2 3 2 7 0 10" fill="none" stroke="#ccc"/></svg>
    <svg class="sys kb" viewBox="0 0 23 14"><rect x=".5" y=".5" width="22" height="13" fill="none" stroke="#fff"/><path d="M3 4h17M3 7h17" stroke="#fff" stroke-dasharray="1 1"/><path d="M6 10.500h11" stroke="#fff"/></svg>
    <span class="ime">中</span>
    <span class="sogou">S</span>
    <div class="clock"><span>10:37</span><span>2018/10/27</span></div>
    <div class="notif"><svg viewBox="0 0 16 14"><path d="M1 0h14v10H9l-2 3v-3H1z" fill="#fff"/><path d="M3 3h10M3 6h10" stroke="#0a1a20"/></svg><b>1</b></div>
  </div>
</div>
</body>
</html>
```
FILE: styles.css
```css
* { box-sizing: border-box; }
html, body { margin: 0; padding: 0; }
body {
  width: 1366px; height: 768px; overflow: hidden;
  font: 12px/16px "Noto Sans CJK SC", "Noto Sans", sans-serif;
  color: #222; background: #f0f0f0;
}
.defs { position: absolute; width: 0; height: 0; }
.sv { font: bold 8px "Liberation Sans", sans-serif; }
.sv.a { fill: #2a5fb0; }
.sv.z { fill: #a02a2a; }
em { font: 12px/1 "Liberation Mono", monospace; letter-spacing: -1.2px; font-style: normal; }
i { font-style: normal; display: block; }
.app { display: flex; flex-direction: column; width: 1366px; height: 768px; }

/* title */
.titlebar { height: 23px; background: #fff; display: flex; align-items: center; padding-left: 2px; position: relative; flex: none; }
.logo { width: 16px; height: 16px; flex: none; }
.apptitle { color: #6e6e6e; font: 12.4px/16px "Noto Sans", "Noto Sans CJK SC", sans-serif; white-space: nowrap; flex: none; }
.t1 { margin-left: 5px; width: 697px; overflow: hidden; }
.t2 { margin-left: 42px; }
.hd { letter-spacing: .08px; }
.winctl { margin-left: auto; display: flex; gap: 34px; padding-right: 19px; }
.winctl svg { width: 12px; height: 12px; }
.badge { position: absolute; left: 720px; top: 0; width: 41px; height: 23px; border-radius: 0 0 20.5px 20.5px / 0 0 21px 21px; background: #3fb45a; box-shadow: 0 2px 5px rgba(0,0,0,.45); color: #fff; font: bold 12px/12px "Noto Sans", sans-serif; text-align: center; }

/* user bar */
.userbar { height: 28px; flex: none; display: flex; justify-content: flex-end; padding-top: 1px; background: #f0f0f0; }
.ublank { width: 24px; height: 24px; margin-right: 2px; background: linear-gradient(#fff, #f7f7f7); }
.ubox { width: 274px; height: 24px; display: flex; align-items: center; background: #f6f6f6; padding-left: 5px; }
.avatar { width: 15px; height: 15px; flex: none; }
.phone { margin-left: 5px; font-family: "Noto Sans", sans-serif; }
.c-phone { margin-left: 6px; }
.beans { margin-left: 9px; }
.bell { width: 14px; height: 17px; margin-left: 9px; }
.chat { width: 17px; height: 16px; margin-left: 8px; }
.suggest { margin-left: 3px; }

/* toolbars */
.toolbar { display: flex; align-items: center; white-space: nowrap; background: linear-gradient(#fbfbfb, #ececec); }
.tb1 { height: 27px; flex: none; padding-bottom: 1px; }
.tb2 { height: 26px; flex: none; border-radius: 2px; padding-bottom: 1px; }
.ic { width: 16px; height: 16px; flex: none; display: block; }
.tool { display: flex; align-items: center; gap: 4px; flex: none; }
.tool.wide { gap: 5px; }
.tool.off span { color: #8a8a8a; }
.plain { flex: none; }
.caret { width: 0; height: 0; flex: none; border: 3px solid transparent; border-top: 3px solid #333; border-bottom-width: 0; }
.sep { width: 1px; height: 20px; background: #c4c4c4; flex: none; }
.sep.tall { height: 23px; }
.more { font: bold 13px/12px "Liberation Sans", sans-serif; width: 8px; flex: none; margin-top: -9px; color: #222; }
.more.end { margin-left: auto; margin-right: 4px; }
.sigma { font: bold 15px/16px "Liberation Serif", serif; width: 10px; text-align: center; margin-right: 4px; }
.g2 { margin-left: 2px; } .g3 { margin-left: 3px; } .g4 { margin-left: 4px; } .g5 { margin-left: 5px; }
.g6 { margin-left: 6px; } .g7 { margin-left: 7px; } .g8 { margin-left: 8px; } .g9 { margin-left: 9px; }
.g13 { margin-left: 13px; } .g22 { margin-left: 22px; } .g33 { margin-left: 33px; }
.combo2d { width: 62px; height: 23px; border: 1px solid #777; display: flex; align-items: center; padding-left: 2px; gap: 3px; color: #888; flex: none; }
.combo2d .caret { margin-left: 5px; }
.floor { width: 61px; height: 21px; background: #fff; display: flex; align-items: center; padding-left: 2px; flex: none; }
.floor .caret { margin-left: 17px; }

/* workspace */
.workspace { display: flex; height: 629px; flex: none; }
.nav { width: 165px; flex: none; padding-top: 3px; display: flex; flex-direction: column; }
.navhead { height: 17px; border: 1px solid #888; border-radius: 1px; display: flex; align-items: center; line-height: 14px; background: #f0f0f0; }
.pin { width: 10px; height: 12px; margin-left: auto; }
.closex { width: 10px; height: 10px; margin: 0 3px 0 9px; }
.navbtn { display: block; width: 164px; height: 22px; margin: 0; padding: 0; border: 1px solid #aaa; background: #f0f0f0; font: inherit; color: #222; text-align: center; line-height: 20px; flex: none; }
.navbtn.b1 { margin-top: 1px; }
.navpanel { height: 518px; flex: none; border: 2px solid #999; border-width: 1px 2px 2px; margin-left: 1px; width: 163px; display: flex; flex-direction: column; background: #f0f0f0; }
.subtool { height: 27px; flex: none; display: flex; align-items: center; padding: 0 0 0 5px; background: linear-gradient(#fafafa, #f0f0f0); border-bottom: 1px solid #aaa; }
.p2 { width: 22px; height: 16px; }
.m2 { width: 20px; height: 16px; margin-left: 2px; }
.treewrap { flex: 1; display: flex; min-height: 0; }
.treeview { width: 143px; background: #fff; padding-top: 1px; position: relative; overflow: hidden; flex: none; }
.dots { position: absolute; left: 0; top: 0; width: 143px; height: 472px; }
.row { height: 16px; display: flex; align-items: center; position: relative; white-space: nowrap; }
.row span { line-height: 16px; }
.lv2 { padding-left: 42px; gap: 5px; }
.lv1 { padding-left: 7px; }
.chev { width: 10px; height: 10px; flex: none; background: #fff; display: block; }
.fld { margin-left: 7px; margin-right: 4px; background: #fff; }
.cur { margin-left: 40px; padding-left: 2px; width: 87px; background: #ccc; }
.gridbtn { width: 13px; height: 15px; flex: none; margin-left: -4px; }
.vscroll { width: 15px; flex: none; display: flex; flex-direction: column; justify-content: flex-end; background: #f0f0f0; position: relative; }
.vscroll .sarrow:first-child { position: absolute; top: 5px; left: 2px; }
.vthumb { height: 226px; background: #c8c8c8; flex: none; }
.vscroll .sarrow:last-child { margin: 4px 0 4px 2px; }
.sarrow { width: 10px; height: 10px; display: block; flex: none; }
.hscroll { height: 16px; flex: none; display: flex; align-items: center; background: #f0f0f0; padding-left: 5px; }
.hthumb { width: 102px; height: 15px; background: #c8c8c8; margin-left: 3px; }
.hscroll .sarrow:last-child { margin-left: 9px; }

.content { flex: 1; min-width: 0; margin-left: 6px; display: flex; flex-direction: column; padding-top: 3px; }
.panes { flex: 1; display: flex; min-height: 0; }
.midcol { width: 184px; flex: none; display: flex; flex-direction: column; height: 598px; }
.searchrow { height: 32px; flex: none; display: flex; align-items: flex-start; padding: 6px 0 0 1px; background: linear-gradient(#f0f0f0 5px, #fff 5px); }
.searchbox { width: 156px; height: 24px; border: 2px solid #a0a0a0; border-bottom-width: 1px; border-right-width: 1px; background: #fff; color: #8a8a8a; font-size: 13px; line-height: 18px; padding-left: 2px; }
.searchbtn { width: 17px; height: 17px; margin: 5px 0 0 6px; }
.comp { flex: 1; border: 2px solid #999; background: #fff; position: relative; padding-top: 0; margin-right: 1px; }
.dots2 { position: absolute; left: 30px; top: 16px; width: 20px; height: 44px; }
.crow { height: 16px; display: flex; align-items: center; position: relative; }
.crow .chev { margin-left: 5px; }
.crow .ic { margin-left: 7px; }
.crow span { margin-left: 5px; }
.sub { padding-left: 39px; }
.csel, .cnon { height: 16px; display: flex; align-items: center; padding-left: 4px; gap: 7px; }
.csel { background: #316ac5; color: #fff; width: 57px; }
.gear { width: 12px; height: 12px; flex: none; }

.propcol { flex: 1; margin-left: 3px; display: flex; flex-direction: column; width: 1005px; }
.tabs { height: 23px; flex: none; margin-right: 4px; margin-left: 4px; background: #fff; border-bottom: 1px solid #ccc; padding-top: 3px; }
.tab { width: 60px; height: 20px; border-right: 1px solid #ccc; padding-left: 4px; line-height: 18px; background: #fff; }
.propbody { height: 572px; flex: none; margin: 0 4px; background: #fff; border: 2px solid #aaa; border-width: 2px 1px 2px 1px; display: flex; align-items: flex-start; padding: 1px 0 0 0; }

/* grid */
.grid { border-collapse: collapse; table-layout: fixed; width: 369px; flex: none; margin: 2px 0 0 0; }
.c0 { width: 21px; } .c1 { width: 191px; } .c2 { width: 126px; } .c3 { width: 31px; }
.grid th, .grid td { border: 1px solid #c4c4c4; padding: 0; height: 19px; font-weight: normal; white-space: nowrap; overflow: visible; }
.grid thead th { height: 22px; background: linear-gradient(#fafafa, #e8e8e8); border-top: 0; text-align: center; line-height: 20px; }
.grid thead th:first-child { border-left: 0; background: #f0f0f0; }
.grid thead .hv { background: linear-gradient(#fbdca0, #f2bc62); color: #660a66; }
.grid tbody th { background: #f0f0f0; text-align: center; border-left: 0; }
.grid td { line-height: 16px; }
.nm { padding-left: 20px !important; position: relative; }
.blue { color: #0a10e8; }
.vl { padding-left: 2px !important; }
.gp { color: #858585; padding-left: 2px !important; }
.bx { width: 12px; height: 12px; margin-right: 6px; vertical-align: -2px; display: inline-block; }
.ck { text-align: center; }
.ck i { width: 13px; height: 13px; border: 1px solid #333; background: #fff; margin: 2px 0 0 9px; }
.act th { background: #fcd38f !important; color: #800080; }
.sel { background: #0078d7; color: #fff; padding-left: 30px !important; }
.in { padding-left: 30px !important; }
.tw { position: absolute; background: #aaa; }
.sel .tw { background: #b0c8e4; }
.v1 { left: 8px; top: -8px; width: 1px; height: 27px; }
.h1 { left: 8px; top: 9px; width: 17px; height: 1px; }
.v2 { left: 8px; top: 0; width: 1px; height: 9px; }
.h2 { left: 8px; top: 9px; width: 17px; height: 1px; }
.vrel { position: relative; }
.dots3 { position: absolute; left: 109px; top: 1px; width: 15px; height: 16px; background: #ddd; border: 1px solid #aaa; text-align: center; font: bold 14px/13px "Liberation Sans", sans-serif; color: #111; }

/* params */
.params { width: 593px; height: 568px; margin-left: 17px; flex: none; border: 1px solid #2aa6d6; border-top-color: #333; border-left-color: #333; background: linear-gradient(#94b2d0, #b8d1e8 32px); padding: 0 7px 8px 7px; display: flex; flex-direction: column; }
.ptitle { height: 30px; flex: none; line-height: 16px; padding-top: 10px; color: #333; }
.canvas { flex: 1; background: #000; border: 1px solid #e8e8e8; border-bottom: 0; border-right: 0; }
.cad { width: 576px; height: 528px; display: block; }
.cad path { shape-rendering: crispEdges; }
.dim { font: 18px "Liberation Serif", serif; letter-spacing: .5px; }
.wh { fill: #fff; }
.gn { fill: #00c000; }
.lbl { font: 14px "Liberation Mono", monospace; letter-spacing: -.5px; fill: #00ff00; }

/* status */
.status { height: 21px; flex: none; display: flex; gap: 2px; padding-top: 1px; background: #f0f0f0; }
.cell { height: 20px; border: 1px solid #dcdcdc; background: linear-gradient(#f8f8f8, #efefef); padding-left: 2px; line-height: 17px; white-space: nowrap; flex: none; }
.s0 { width: 148px; } .s1 { width: 78px; } .s2 { width: 98px; } .s3 { width: 48px; } .s4 { width: 914px; } .s5 { width: 70px; }

/* taskbar */
.taskbar { height: 40px; flex: none; background: #07171c; display: flex; align-items: center; color: #fff; }
.start { width: 48px; height: 40px; background: #040809; display: flex; align-items: center; justify-content: center; flex: none; }
.winlogo { width: 16px; height: 16px; }
.search { width: 344px; height: 40px; background: #f2f2f2; display: flex; align-items: center; color: #444; font-size: 14px; flex: none; }
.cortana { width: 22px; height: 22px; border: 3px solid #222; border-radius: 50%; margin-left: 9px; }
.search span { margin-left: 9px; }
.mic { width: 12px; height: 18px; margin-left: 110px; }
.tray-apps { display: flex; align-items: center; height: 40px; position: relative; flex: none; width: 514px; }
.tk { position: absolute; top: 50%; transform: translateY(-50%); }
.tv { left: 15px; width: 16px; height: 16px; }
.fan { left: 63px; width: 22px; height: 22px; }
.ie1 { left: 114px; width: 26px; height: 28px; }
.sw { left: 165px; width: 28px; height: 24px; }
.ed { left: 215px; width: 20px; height: 20px; }
.ie2 { left: 251px; width: 24px; height: 24px; }
.fd { left: 291px; width: 22px; height: 20px; }
.grn { left: 330px; width: 22px; height: 24px; }
.ml { left: 366px; width: 24px; height: 18px; }
.gg { left: 403px; width: 24px; height: 24px; }
.bk { left: 442px; width: 24px; height: 24px; }
.ul { position: absolute; bottom: 0; height: 2px; background: #76b9ed; }
.u1 { left: 326px; width: 29px; }
.u2 { left: 402px; width: 23px; }
.u3 { left: 440px; width: 24px; }
.activeapp { position: absolute; left: 474px; top: 0; width: 37px; height: 40px; background: #3a4a50; border-bottom: 2px solid #76b9ed; padding: 7px 0 0 6px; }
.activeapp svg { width: 24px; height: 24px; display: block; }
.tbscroll { width: 17px; height: 40px; background: #f2f2f2; display: flex; flex-direction: column; justify-content: space-around; align-items: center; flex: none; }
.weather { width: 82px; margin-left: 2px; display: flex; flex-direction: column; align-items: center; gap: 2px; flex: none; }
.sys { flex: none; display: block; }
.people { width: 16px; height: 16px; margin-left: 14px; }
.up { width: 12px; height: 8px; margin-left: 21px; }
.bat { width: 18px; height: 16px; margin-left: 9px; }
.wifi { width: 16px; height: 16px; margin-left: 10px; }
.vol { width: 18px; height: 16px; margin-left: 5px; }
.kb { width: 23px; height: 14px; margin-left: 8px; }
.ime { font-size: 13px; margin-left: 10px; }
.sogou { width: 16px; height: 18px; margin-left: 14px; background: #e8401c; border-radius: 3px; color: #fff; font: bold 14px/18px "Liberation Sans", sans-serif; text-align: center; }
.clock { width: 67px; margin-left: 13px; display: flex; flex-direction: column; align-items: center; gap: 2px; font-family: "Noto Sans", sans-serif; flex: none; }
.notif { width: 24px; margin-left: 16px; position: relative; height: 24px; }
.notif svg { width: 16px; height: 14px; display: block; margin-top: 2px; }
.notif b { position: absolute; left: 6px; top: 8px; width: 16px; height: 16px; border-radius: 50%; background: #444; color: #fff; font: bold 11px/16px "Liberation Sans", sans-serif; text-align: center; }
```
